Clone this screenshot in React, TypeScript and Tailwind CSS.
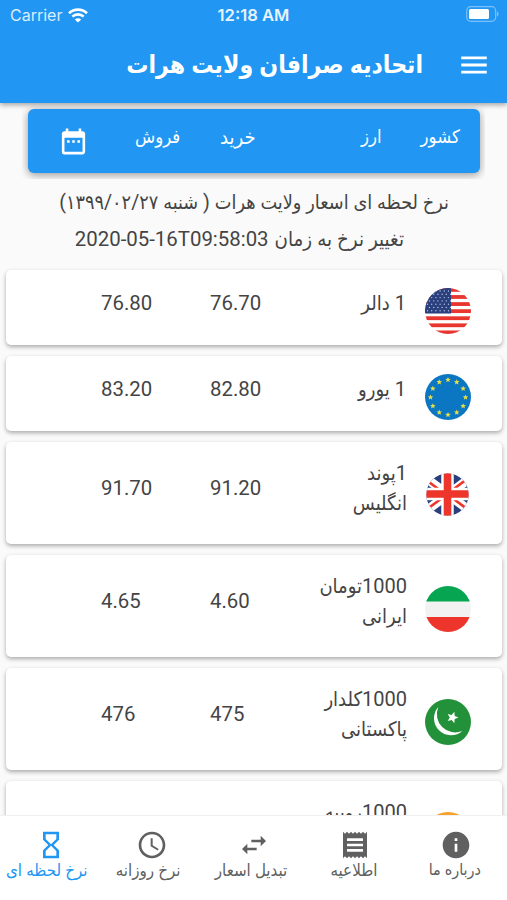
import type { ReactNode } from 'react';
import {
  MdAccessTime,
  MdDateRange,
  MdHourglassEmpty,
  MdInfo,
  MdMenu,
  MdReceipt,
  MdSwapHoriz,
} from 'react-icons/md';

const star = (cx: number, cy: number, r: number) =>
  Array.from({ length: 10 }, (_, i) => {
    const a = (Math.PI / 5) * i - Math.PI / 2;
    const d = i % 2 ? r * 0.45 : r;
    return `${cx + d * Math.cos(a)},${cy + d * Math.sin(a)}`;
  }).join(' ');

function Flag({ id, children }: { id: string; children: ReactNode }) {
  return (
    <svg viewBox="0 0 46 46" className="h-[46px] w-[46px]">
      <clipPath id={id}>
        <circle cx="23" cy="23" r="23" />
      </clipPath>
      <g clipPath={`url(#${id})`}>{children}</g>
    </svg>
  );
}

const UsFlag = () => (
  <Flag id="us">
    <rect width="46" height="46" fill="#fff" />
    {[0, 1, 2, 3, 4, 5, 6].map((i) => (
      <rect key={i} y={i * 7.08} width="46" height="3.8" fill="#e8352e" />
    ))}
    <rect width="26" height="25.5" fill="#2a3f7e" />
    {Array.from({ length: 42 }, (_, i) => {
      const row = Math.floor(i / 6);
      return (
        <circle key={i} cx={2.5 + (i % 6) * 4.2 + (row % 2) * 2} cy={3 + row * 3.3} r="0.7" fill="#b9c3de" />
      );
    })}
  </Flag>
);

const EuFlag = () => (
  <Flag id="eu">
    <rect width="46" height="46" fill="#0b77c2" />
    {Array.from({ length: 12 }, (_, i) => {
      const a = (Math.PI / 6) * i;
      return (
        <polygon key={i} points={star(23 + 17.5 * Math.cos(a), 23.3 + 17.5 * Math.sin(a), 2.9)} fill="#e6df48" />
      );
    })}
  </Flag>
);

const UkFlag = () => (
  <Flag id="uk">
    <clipPath id="uk-inner">
      <circle cx="22.5" cy="21.5" r="21.2" />
    </clipPath>
    <g clipPath="url(#uk-inner)">
      <rect width="46" height="46" fill="#2a3f7e" />
      <path d="M-4 1.5 50 41.5M50 1.5-4 41.5" stroke="#fff" strokeWidth="9" />
      <path d="M-4 3 22 22.5M24 22.5 50 42M50 0 24 19.5M22 21.5-4 40.5" stroke="#ee352c" strokeWidth="2.6" />
      <path d="M22.5 0v46M0 21h46" stroke="#fff" strokeWidth="12.5" />
      <path d="M22.5 0v46M0 21h46" stroke="#ee352c" strokeWidth="7.6" />
    </g>
  </Flag>
);

const IranFlag = () => (
  <Flag id="ir">
    <rect width="46" height="46" fill="#f2f2f3" />
    <rect width="46" height="15.5" fill="#06a551" />
    <rect y="31" width="46" height="15" fill="#ee352c" />
  </Flag>
);

const PakistanFlag = () => (
  <Flag id="pk">
    <rect width="46" height="46" fill="#229139" />
    <path d="M13.3 8A17 17 0 0 0 37.3 32A18.3 18.3 0 0 1 13.3 8Z" fill="#fff" />
    <polygon points={star(0, 0, 6)} transform="translate(27.5 18.5) rotate(18)" fill="#fff" />
  </Flag>
);

const IndiaFlag = () => (
  <Flag id="in">
    <rect width="46" height="46" fill="#f4f4f4" />
    <rect width="46" height="15.5" fill="#f6a22b" />
    <rect y="31" width="46" height="15" fill="#229139" />
  </Flag>
);

const rates = [
  { name: ['1 دالر'], buy: '76.70', sell: '76.80', flag: UsFlag },
  { name: ['1 یورو'], buy: '82.80', sell: '83.20', flag: EuFlag },
  { name: ['1پوند', 'انگلیس'], buy: '91.20', sell: '91.70', flag: UkFlag },
  { name: ['1000تومان', 'ایرانی'], buy: '4.60', sell: '4.65', flag: IranFlag },
  { name: ['1000کلدار', 'پاکستانی'], buy: '475', sell: '476', flag: PakistanFlag },
  { name: ['1000روپیه'], buy: '', sell: '', flag: IndiaFlag, tall: true },
];

const tabs = [
  { label: 'درباره ما', icon: MdInfo, shift: 'pr-[3px] text-[16px]' },
  { label: 'اطلاعیه', icon: MdReceipt, shift: 'pr-[2px]' },
  { label: 'تبدیل اسعار', icon: MdSwapHoriz, shift: 'pr-[5px]' },
  { label: 'نرخ روزانه', icon: MdAccessTime, shift: 'pr-2' },
  { label: 'نرخ لحظه ای', icon: MdHourglassEmpty, shift: 'pr-2', active: true },
];

function StatusBar() {
  return (
    <div className="grid h-[30px] grid-cols-3 items-center pr-2 pl-[10px] font-['Inter',sans-serif] text-[16px]" dir="ltr">
      <div className="flex items-center gap-[6px] text-[#d9edfd]">
        <span>Carrier</span>
        <svg viewBox="0 0 20 15" className="h-[15px] w-5" fill="none" stroke="#fff" strokeWidth="2.6">
          <path d="M1 5.2C6 .4 14 .4 19 5.2M4.3 8.6c3.2-3 8.2-3 11.4 0" />
          <path d="M10 14.6 6.8 11.4c1.8-1.6 4.6-1.6 6.4 0Z" fill="#fff" stroke="none" />
        </svg>
      </div>
      <span className="pr-[2px] text-center text-[16.6px] font-semibold text-[#e6f3fe]">12:18 AM</span>
      <svg viewBox="0 0 33 16" className="mb-[2px] h-4 w-[33px] justify-self-end">
        <rect x=".7" y=".7" width="29" height="14.6" rx="4" fill="none" stroke="#7cc1f9" strokeWidth="1.2" />
        <rect x="3" y="3" width="20" height="10" rx="1.5" fill="#fff" />
        <path d="M31 5.5c2 .8 2 4.2 0 5Z" fill="#7cc1f9" />
      </svg>
    </div>
  );
}

type Rate = { name: string[]; buy: string; sell: string; flag: () => ReactNode; tall?: boolean };

function RateCard({ name, buy, sell, flag: FlagIcon, tall = name.length > 1 }: Rate) {
  return (
    <div
      className={`grid shrink-0 grid-cols-[109px_1fr_110px_64px] rounded-[5px] bg-white pr-[31px] pl-[95px] shadow-[0_2px_4px_rgba(0,0,0,0.32)] ${tall ? 'h-[102px]' : 'h-[75px]'}`}
      dir="ltr"
    >
      <span className={tall ? 'pt-[31px]' : 'pt-[18px]'}>{sell}</span>
      <span className={tall ? 'pt-[31px]' : 'pt-[18px]'}>{buy}</span>
      <div dir="rtl" className={`text-[20px] whitespace-nowrap ${tall ? 'pt-[16px]' : 'pt-[18px] pr-[1px]'}`}>
        {name.map((line) => (
          <div key={line} className="h-[30px]">{line}</div>
        ))}
      </div>
      <div className={`flex justify-end ${tall ? 'pt-[31px]' : 'pt-[18px]'}`}>
        <FlagIcon />
      </div>
    </div>
  );
}

export default function App() {
  return (
    <div
      dir="rtl"
      className="flex h-[900px] w-[507px] flex-col overflow-hidden bg-[#fafafa] font-['Roboto','DejaVu_Sans_Condensed','DejaVu_Sans',sans-serif] text-[20.4px] leading-[30px] text-[#444]"
    >
      <header className="z-10 h-[103px] shrink-0 bg-[#2196f3] text-white shadow-[0_2px_5px_rgba(0,0,0,0.35)]">
        <StatusBar />
        <div className="flex h-[70px] items-center gap-[34px] pr-4">
          <MdMenu className="h-[34px] w-[34px]" />
          <h1 className="text-[24.6px] font-bold whitespace-nowrap">اتحادیه صرافان ولایت هرات</h1>
        </div>
      </header>

      <main className="flex min-h-0 flex-1 flex-col overflow-hidden">
        <div className="mx-[22px] h-[76px] shrink-0 overflow-hidden px-[5px] pt-[6px] pl-[6px]">
          <div
            dir="ltr"
            className="grid h-16 grid-cols-[77px_85px_141px_1fr] rounded-[6px] bg-[#2196f3] pl-[30px] text-[18.4px] text-white shadow-[0_2px_9px_rgba(0,0,0,0.4)]"
          >
            <MdDateRange className="mt-4 h-[33px] w-[31px]" />
            <span className="pt-[13px]">فروش</span>
            <span className="pt-[13px] text-[20px]">خرید</span>
            <div className="flex gap-[39px] pt-[13px]">
              <span>ارز</span>
              <span>کشور</span>
            </div>
          </div>
        </div>

        <div className="h-[91px] shrink-0 pt-[9px] text-[19.7px] whitespace-nowrap">
          <p className="h-9 pr-[58px]">نرخ لحظه ای اسعار ولایت هرات ( شنبه ۱۳۹۹/۰۲/۲۷)</p>
          <p className="flex gap-[6px] pr-[103px]">
            <span className="text-[20.3px]">تغییر نرخ به زمان</span>
            <span dir="ltr" className="text-[20.4px]">2020-05-16T09:58:03</span>
          </p>
        </div>

        <div className="flex flex-col gap-[11px] pr-[5px] pl-[6px]">
          {rates.map((rate) => (
            <RateCard key={rate.name[0]} {...rate} />
          ))}
        </div>
      </main>

      <nav className="z-10 grid h-[85px] shrink-0 grid-cols-5 border-t border-[#f0f0f0] bg-white pt-[13px] text-[16.8px] leading-[18px] whitespace-nowrap">
        {tabs.map(({ label, icon: Icon, shift, active }) => (
          <div key={label} className={`flex flex-col items-center ${active ? 'text-[#2196f3]' : 'text-[#606060]'}`}>
            <Icon className="h-8 w-8" />
            <span className={shift}>{label}</span>
          </div>
        ))}
      </nav>
    </div>
  );
}
